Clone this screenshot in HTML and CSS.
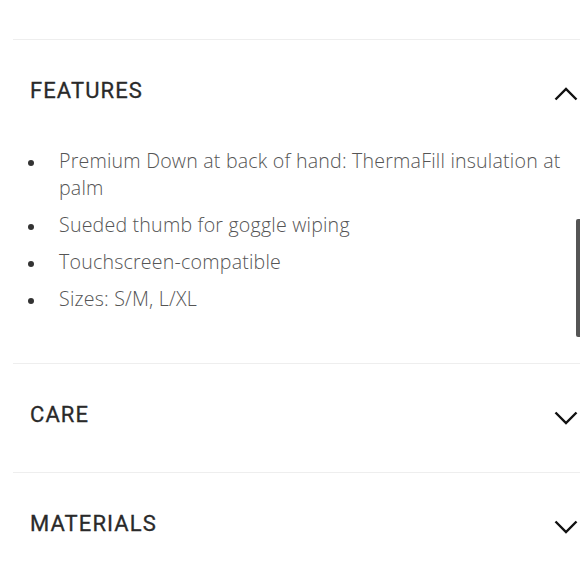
FILE: index.html
```html
<!DOCTYPE html>
<html lang="en">
<head>
<meta charset="utf-8">
<title>Product details</title>
<link rel="stylesheet" href="styles.css">
</head>
<body>
<div class="page">
  <section class="section">
    <div class="header">
      <h2 class="title">FEATURES</h2>
      <svg class="chev" width="24" height="14" viewBox="0 0 24 14"><polyline points="1.5,12.5 12,2 22.5,12.5" fill="none" stroke="#111" stroke-width="2.4"/></svg>
    </div>
    <ul class="list">
      <li class="item">Premium Down at back of hand: ThermaFill insulation at palm</li>
      <li class="item">Sueded thumb for goggle wiping</li>
      <li class="item">Touchscreen-compatible</li>
      <li class="item">Sizes: S/M, L/XL</li>
    </ul>
  </section>
  <section class="section">
    <div class="header closed">
      <h2 class="title">CARE</h2>
      <svg class="chev" width="24" height="14" viewBox="0 0 24 14"><polyline points="1.5,1.5 12,12 22.5,1.5" fill="none" stroke="#111" stroke-width="2.4"/></svg>
    </div>
  </section>
  <section class="section">
    <div class="header closed">
      <h2 class="title">MATERIALS</h2>
      <svg class="chev" width="24" height="14" viewBox="0 0 24 14"><polyline points="1.5,1.5 12,12 22.5,1.5" fill="none" stroke="#111" stroke-width="2.4"/></svg>
    </div>
  </section>
</div>
<div class="scrollbar"></div>
</body>
</html>
```
FILE: styles.css
```css
html, body {
  margin: 0;
  padding: 0;
  background: #fff;
}
.page {
  padding: 39px 0 0 13px;
}
.section {
  border-top: 1px solid #eeeeee;
}
.header {
  display: flex;
  justify-content: space-between;
  align-items: center;
  padding: 40px 2px 0 17px;
}
.header.closed {
  padding-bottom: 46px;
}
.title {
  margin: 0;
  font-family: Roboto, "Liberation Sans", sans-serif;
  font-weight: 400;
  font-size: 22px;
  line-height: 22px;
  letter-spacing: 1.1px;
  color: #2a2a2a;
  -webkit-text-stroke: 0.3px #2a2a2a;
}
.chev {
  display: block;
  margin-top: 5px;
}
.list {
  list-style: none;
  margin: 45px 0 0;
  padding: 0 8px 51px 0;
}
.item {
  display: flex;
  font-family: "Open Sans", "Liberation Sans", sans-serif;
  font-weight: 300;
  font-size: 19.6px;
  line-height: 27px;
  letter-spacing: 0.2px;
  color: #555;
  margin-bottom: 10px;
}
.item:last-child {
  margin-bottom: 0;
}
.item::before {
  content: "";
  flex: 0 0 6px;
  width: 6px;
  height: 6px;
  border-radius: 50%;
  background: #333;
  margin: 13px 25px 0 15px;
}
.scrollbar {
  position: fixed;
  right: 0;
  top: 219px;
  width: 4px;
  height: 118px;
  background: #555;
  border-radius: 2px 0 0 2px;
}
```
